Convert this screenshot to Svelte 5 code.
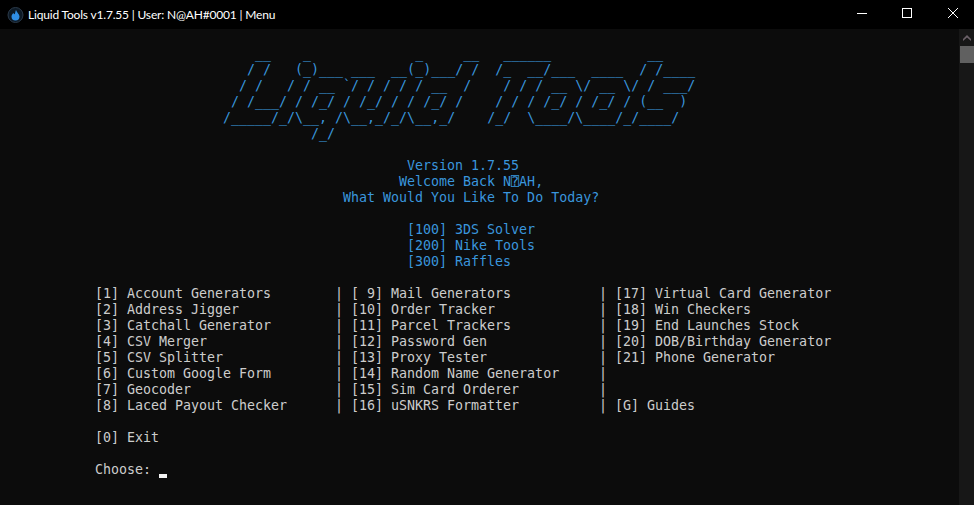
<script>
	let banner = `    __    _             _     __   ______            __
   / /   (_)___ ___  __(_)___/ /  /_  __/___  ____  / /____
  / /   / / __ \`/ / / / / __  /    / / / __ \\/ __ \\/ / ___/
 / /___/ / /_/ / /_/ / / /_/ /    / / / /_/ / /_/ / (__  )
/_____/_/\\__, /\\__,_/_/\\__,_/    /_/  \\____/\\____/_/____/
           /_/`;

	let welcome = [
		"        Version 1.7.55",
		"       Welcome Back N⍰AH,",
		"What Would You Like To Do Today?",
		"",
		"        [100] 3DS Solver",
		"        [200] Nike Tools",
		"        [300] Raffles",
	];

	let menu = [
		["[1] Account Generators", "[ 9] Mail Generators", "[17] Virtual Card Generator"],
		["[2] Address Jigger", "[10] Order Tracker", "[18] Win Checkers"],
		["[3] Catchall Generator", "[11] Parcel Trackers", "[19] End Launches Stock"],
		["[4] CSV Merger", "[12] Password Gen", "[20] DOB/Birthday Generator"],
		["[5] CSV Splitter", "[13] Proxy Tester", "[21] Phone Generator"],
		["[6] Custom Google Form", "[14] Random Name Generator", ""],
		["[7] Geocoder", "[15] Sim Card Orderer", ""],
		["[8] Laced Payout Checker", "[16] uSNKRS Formatter", "[G] Guides"],
	];
</script>

<div class="ventana">
	<div class="titulo">
		<svg class="logo" width="18" height="18" viewBox="0 0 18 18">
			<circle cx="8.5" cy="9" r="7.5" fill="#0d1a26" stroke="#2b3a4a" />
			<path d="M9 4C9.5 6.2 12.5 8 12.5 10.6A4 4 0 0 1 4.5 10.6C4.5 9 5.7 8 6.3 7C6.8 7.8 7.3 8.2 7.7 8.2C8.3 7 8.3 5.4 9 4Z" fill="#2f8fe6" />
		</svg>
		<span class="nombre">Liquid Tools v1.7.55 | User: N@AH#0001 | Menu</span>
		<div class="controles">
			<button aria-label="Minimizar">
				<svg class="min" width="10" height="10" viewBox="-1 0 10 10"><path d="M0 5.5H10" stroke="#fff" /></svg>
			</button>
			<button aria-label="Maximizar">
				<svg width="10" height="10" viewBox="0 0 10 10"><rect x="0.5" y="0.5" width="9" height="9" fill="none" stroke="#fff" /></svg>
			</button>
			<button aria-label="Cerrar">
				<svg width="10" height="10" viewBox="0 0 10 10"><path d="M0 0L10 10M10 0L0 10" stroke="#fff" /></svg>
			</button>
		</div>
	</div>

	<div class="cuerpo">
		<div class="consola">
			<pre class="azul arte">{banner}</pre>
			<pre class="azul saludo">{welcome.join("\n")}</pre>
			<div class="menu">
				{#each menu as fila}
					<div class="fila">
						<span class="c1">{fila[0]}</span>
						<span class="c2">{fila[1]}</span>
						<span class="c3">{fila[2]}</span>
					</div>
				{/each}
			</div>
			<div class="salida">[0] Exit</div>
			<div class="elegir">Choose: <i class="cursor"></i></div>
		</div>
		<div class="barra">
			<svg class="flecha" width="8" height="6" viewBox="0 0 8 6"><path d="M4 0L8 4V6L4 2.5L0 6V4Z" fill="#6b6068" /></svg>
			<div class="pulgar"></div>
		</div>
	</div>
</div>

<style>
	:global(body) {
		background: #0c0c0c;
	}
	.ventana {
		width: 974px;
		height: 505px;
		display: flex;
		flex-direction: column;
		overflow: hidden;
	}
	.titulo {
		height: 29px;
		background: #000;
		display: flex;
		align-items: center;
		padding-left: 7px;
		flex-shrink: 0;
	}
	.logo {
		margin-right: 3px;
	}
	.nombre {
		color: #fff;
		font-family: Lato, sans-serif;
		font-size: 12px;
		letter-spacing: -0.18px;
	}
	.controles {
		margin-left: auto;
		margin-right: -2px;
		display: flex;
		align-self: flex-start;
	}
	.controles button {
		width: 46px;
		height: 26px;
		background: none;
		border: 0;
		padding: 0;
		display: flex;
		align-items: center;
		justify-content: center;
	}
	.min {
		overflow: visible;
	}
	.cuerpo {
		flex: 1;
		display: flex;
		background: #0c0c0c;
	}
	.consola {
		flex: 1;
		padding: 17px 0 0 7px;
		color: #cccccc;
		font-family: "DejaVu Sans Mono", monospace;
		font-size: 13.3px;
		line-height: 16px;
	}
	pre {
		margin: 0;
		font: inherit;
	}
	.azul {
		color: #3a96dd;
	}
	.arte {
		margin-left: 216px;
	}
	.saludo {
		margin: 16px 0 16px 336px;
	}
	.menu {
		margin-left: 88px;
	}
	.fila {
		display: grid;
		grid-template-columns: 240px 264px 1fr;
		white-space: pre;
	}
	.c2,
	.c3 {
		position: relative;
		padding-left: 16px;
	}
	.c2::before,
	.c3::before {
		content: "|";
		position: absolute;
		left: 0;
	}
	.salida {
		margin: 16px 0 16px 88px;
	}
	.elegir {
		margin-left: 88px;
		white-space: pre;
	}
	.cursor {
		display: inline-block;
		width: 8px;
		height: 4px;
		background: #f2f2f2;
		vertical-align: -4px;
	}
	.barra {
		width: 15px;
		background: #171717;
		display: flex;
		flex-direction: column;
		align-items: flex-end;
	}
	.flecha {
		margin: 6px 3px 5px 0;
	}
	.pulgar {
		width: 14px;
		height: 17px;
		background: #606060;
	}
</style>
